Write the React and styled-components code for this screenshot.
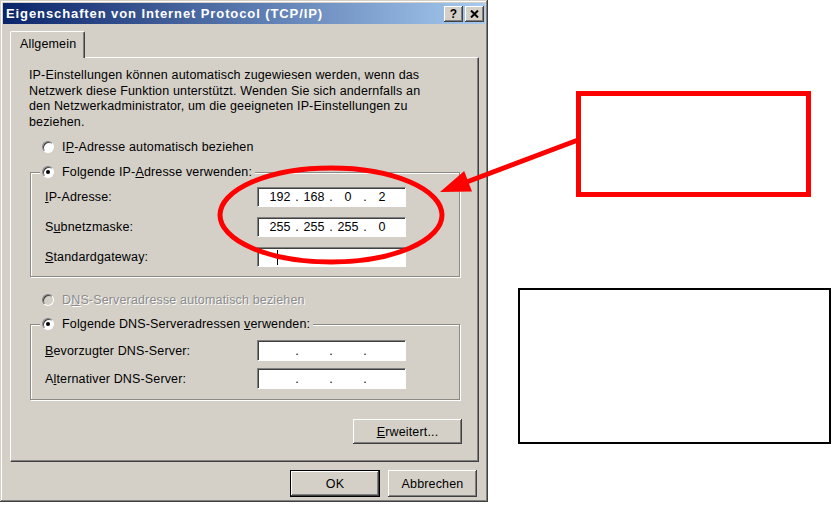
import React from "react";
import styled, { createGlobalStyle } from "styled-components";

const face = "#d4d0c8";

const GlobalStyle = createGlobalStyle`
  html, body {
    margin: 0;
    padding: 0;
    background: #fff;
  }
  body {
    font-family: "Liberation Sans", Arial, sans-serif;
  }
`;

const Page = styled.div`
  position: relative;
  display: flex;
  align-items: flex-start;
  width: 831px;
  height: 506px;
  overflow: hidden;
`;

const Dialog = styled.div`
  box-sizing: border-box;
  display: flex;
  flex-direction: column;
  flex-shrink: 0;
  width: 488px;
  height: 502px;
  padding: 3px;
  background: ${face};
  box-shadow: inset -1px -1px #404040, inset 1px 1px ${face},
    inset -2px -2px #808080, inset 2px 2px #fff;
  font-size: 12.5px;
  letter-spacing: 0.15px;
  color: #000;
`;

const TitleBar = styled.div`
  display: flex;
  align-items: center;
  justify-content: space-between;
  height: 21px;
  padding: 0 1px 0 3px;
  background: linear-gradient(to right, #0a246a, #a6caf0);
`;

const Title = styled.span`
  color: #fff;
  font-weight: bold;
  font-size: 13px;
  letter-spacing: 0.9px;
  white-space: nowrap;
`;

const TitleButtons = styled.div`
  display: flex;
  gap: 2px;
`;

const TitleButton = styled.div`
  box-sizing: border-box;
  display: flex;
  align-items: center;
  justify-content: center;
  width: 19px;
  height: 16px;
  background: ${face};
  box-shadow: inset -1px -1px #404040, inset 1px 1px #fff,
    inset -2px -2px #808080;
  font-weight: bold;
  font-size: 12px;
  letter-spacing: 0;
`;

const Body = styled.div`
  display: flex;
  flex-direction: column;
  padding: 7px 6px 0 7px;
`;

const TabStrip = styled.div`
  position: relative;
  z-index: 1;
  display: flex;
  height: 27px;
  margin-bottom: -1px;
`;

const Tab = styled.div`
  box-sizing: border-box;
  display: flex;
  align-items: center;
  height: 27px;
  padding: 0 8px 2px 9px;
  background: ${face};
  border-top: 1px solid #fff;
  border-left: 1px solid #fff;
  border-right: 1px solid #404040;
  box-shadow: inset -1px 0 #808080;
  border-radius: 2px 2px 0 0;
`;

const Panel = styled.div`
  box-sizing: border-box;
  display: flex;
  flex-direction: column;
  height: 405px;
  padding: 10px 18px 0 19px;
  border: 1px solid;
  border-color: #fff #404040 #404040 #fff;
  box-shadow: inset -1px -1px #808080;
`;

const Intro = styled.p`
  margin: 0 0 0 -1px;
  line-height: 15.5px;
  white-space: nowrap;
`;

const RadioRow = styled.label`
  display: flex;
  align-items: center;
  gap: 8px;
  height: 16px;
  margin: ${(p) => p.$mt || 0}px 0 0 ${(p) => p.$ml ?? 12}px;
  color: ${(p) => (p.$disabled ? "#8c8c8c" : "#000")};
  text-shadow: ${(p) => (p.$disabled ? "1px 1px #fff" : "none")};
  white-space: nowrap;
`;

const RadioDot = styled.span`
  position: relative;
  box-sizing: border-box;
  flex-shrink: 0;
  width: 12px;
  height: 12px;
  border-radius: 50%;
  background: ${(p) => (p.$disabled ? face : "#fff")};
  border: 1px solid;
  border-color: #808080 #fff #fff #808080;
  box-shadow: inset 1px 1px #404040;

  &::after {
    content: "";
    display: ${(p) => (p.$checked ? "block" : "none")};
    position: absolute;
    left: 3px;
    top: 3px;
    width: 4px;
    height: 4px;
    border-radius: 50%;
    background: #000;
  }
`;

const Group = styled.fieldset`
  display: flex;
  flex-direction: column;
  gap: ${(p) => p.$gap}px;
  min-width: 0;
  margin: ${(p) => p.$mt}px 0 0 0;
  padding: ${(p) => p.$pt}px 0 ${(p) => p.$pb}px 0;
  border: 1px solid #8c8a84;
  box-shadow: 1px 1px 0 #fff, inset 1px 1px 0 #fff;
`;

const Legend = styled.legend`
  margin-left: 9px;
  padding: 0 3px 0 2px;
  background: ${face};
`;

const FieldRow = styled.div`
  display: grid;
  grid-template-columns: 212px 149px;
  align-items: center;
  height: ${(p) => p.$h}px;
  padding-left: 14px;
  white-space: nowrap;
`;

const IpField = styled.div`
  box-sizing: border-box;
  display: flex;
  align-items: center;
  height: 100%;
  padding-left: ${(p) => (p.$blank ? 0 : 10)}px;
  background: #fff;
  border: 1px solid;
  border-color: #808080 #fff #fff #808080;
  box-shadow: inset 1px 1px #404040;
`;

const Octet = styled.span`
  width: 24px;
  text-align: center;
  letter-spacing: 0;
`;

const Dot = styled.span`
  width: 10px;
  text-align: center;
  letter-spacing: 0;
`;

const Caret = styled.span`
  width: 1px;
  height: 15px;
  margin-left: 19px;
  background: #000;
`;

const Button = styled.button`
  box-sizing: border-box;
  display: flex;
  align-items: center;
  justify-content: center;
  width: ${(p) => p.$w}px;
  height: ${(p) => p.$h}px;
  padding: 0;
  font: inherit;
  letter-spacing: inherit;
  color: #000;
  background: ${face};
  border: ${(p) => (p.$default ? "1px solid #000" : "none")};
  box-shadow: inset -1px -1px #404040, inset 1px 1px #fff,
    inset -2px -2px #808080;
`;

const MoreButton = styled(Button)`
  align-self: flex-end;
  margin: 19px -2px 0 0;
`;

const ButtonRow = styled.div`
  display: flex;
  justify-content: flex-end;
  gap: 8px;
  margin-top: 8px;
  padding-right: 2px;
`;

const Notes = styled.div`
  display: flex;
  flex-direction: column;
  flex: 1;
`;

const RedBox = styled.div`
  box-sizing: border-box;
  width: 235px;
  height: 106px;
  margin: 91px 0 0 88px;
  border: 5px solid #ff0000;
`;

const BlackBox = styled.div`
  box-sizing: border-box;
  width: 313px;
  height: 156px;
  margin: 91px 0 0 30px;
  border: 2px solid #000;
`;

const Markup = styled.svg`
  position: absolute;
  left: 0;
  top: 0;
  pointer-events: none;
`;

function IpAddress({ parts, caret }) {
  if (caret) {
    return (
      <IpField $blank>
        <Caret />
      </IpField>
    );
  }
  return (
    <IpField>
      {parts.map((part, i) => (
        <React.Fragment key={i}>
          <Octet>{part}</Octet>
          {i < 3 && <Dot>.</Dot>}
        </React.Fragment>
      ))}
    </IpField>
  );
}

function Radio({ checked, disabled, children, ...rest }) {
  return (
    <RadioRow $disabled={disabled} {...rest}>
      <RadioDot $checked={checked} $disabled={disabled} />
      <span>{children}</span>
    </RadioRow>
  );
}

export default function App() {
  const empty = ["", "", "", ""];
  return (
    <Page>
      <GlobalStyle />
      <Dialog>
        <TitleBar>
          <Title>Eigenschaften von Internet Protocol (TCP/IP)</Title>
          <TitleButtons>
            <TitleButton>?</TitleButton>
            <TitleButton>
              <svg width="9" height="8" viewBox="0 0 9 8">
                <path d="M1 0.5 L8 7.5 M8 0.5 L1 7.5" stroke="#000" strokeWidth="2" />
              </svg>
            </TitleButton>
          </TitleButtons>
        </TitleBar>

        <Body>
          <TabStrip>
            <Tab>Allgemein</Tab>
          </TabStrip>
          <Panel>
            <Intro>
              IP-Einstellungen können automatisch zugewiesen werden, wenn das
              <br />
              Netzwerk diese Funktion unterstützt. Wenden Sie sich andernfalls an
              <br />
              den Netzwerkadministrator, um die geeigneten IP-Einstellungen zu
              <br />
              beziehen.
            </Intro>

            <Radio $mt={9}>
              I<u>P</u>-Adresse automatisch beziehen
            </Radio>

            <Group $mt={9} $pt={7} $pb={9} $gap={10}>
              <Legend>
                <Radio checked $ml={0}>
                  Folgende IP-<u>A</u>dresse verwenden:
                </Radio>
              </Legend>
              <FieldRow $h={20}>
                <span>
                  <u>I</u>P-Adresse:
                </span>
                <IpAddress parts={["192", "168", "0", "2"]} />
              </FieldRow>
              <FieldRow $h={20}>
                <span>
                  S<u>u</u>bnetzmaske:
                </span>
                <IpAddress parts={["255", "255", "255", "0"]} />
              </FieldRow>
              <FieldRow $h={20}>
                <span>
                  <u>S</u>tandardgateway:
                </span>
                <IpAddress caret />
              </FieldRow>
            </Group>

            <Radio disabled $mt={15}>
              D<u>N</u>S-Serveradresse automatisch beziehen
            </Radio>

            <Group $mt={8} $pt={8} $pb={10} $gap={7}>
              <Legend>
                <Radio checked $ml={0}>
                  Folgende DNS-Serveradressen <u>v</u>erwenden:
                </Radio>
              </Legend>
              <FieldRow $h={21}>
                <span>
                  <u>B</u>evorzugter DNS-Server:
                </span>
                <IpAddress parts={empty} />
              </FieldRow>
              <FieldRow $h={21}>
                <span>
                  A<u>l</u>ternativer DNS-Server:
                </span>
                <IpAddress parts={empty} />
              </FieldRow>
            </Group>

            <MoreButton $w={109} $h={25}>
              <span>
                <u>E</u>rweitert...
              </span>
            </MoreButton>
          </Panel>

          <ButtonRow>
            <Button $default $w={90} $h={27}>
              OK
            </Button>
            <Button $w={89} $h={27}>
              Abbrechen
            </Button>
          </ButtonRow>
        </Body>
      </Dialog>

      <Notes>
        <RedBox />
        <BlackBox />
      </Notes>

      <Markup width="831" height="506" viewBox="0 0 831 506">
        <ellipse cx="331" cy="215" rx="111" ry="47" fill="none" stroke="#ff0000" strokeWidth="5" />
        <line x1="578" y1="140" x2="464" y2="183" stroke="#ff0000" strokeWidth="5" />
        <polygon points="440,192 464.2,171 472,191.6" fill="#ff0000" />
      </Markup>
    </Page>
  );
}
